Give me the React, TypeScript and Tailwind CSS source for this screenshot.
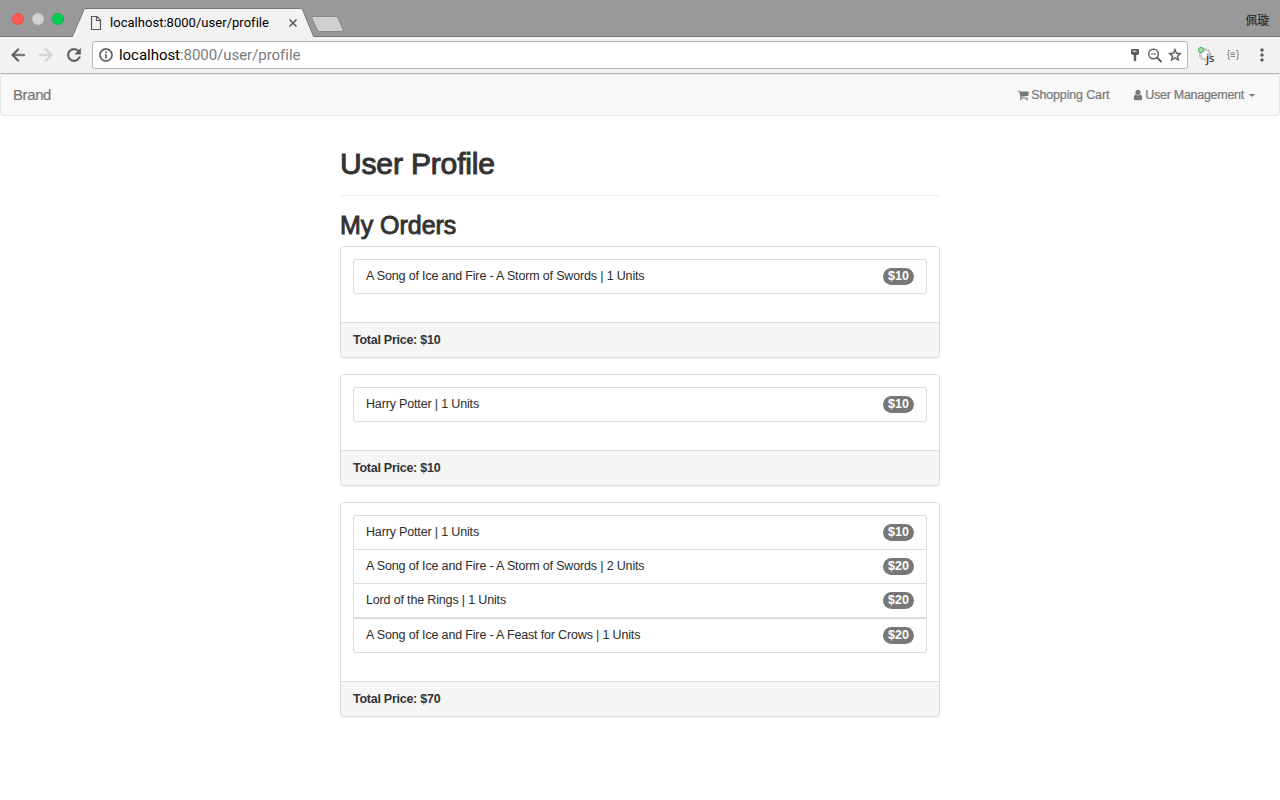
import type { ReactNode } from 'react';
import { MdArrowBack, MdArrowForward, MdRefresh, MdInfoOutline, MdStarBorder, MdMoreVert } from 'react-icons/md';

type Item = { title: string; units: number; price: number };

const orders: { items: Item[]; total: number }[] = [
  { items: [{ title: 'A Song of Ice and Fire - A Storm of Swords', units: 1, price: 10 }], total: 10 },
  { items: [{ title: 'Harry Potter', units: 1, price: 10 }], total: 10 },
  {
    items: [
      { title: 'Harry Potter', units: 1, price: 10 },
      { title: 'A Song of Ice and Fire - A Storm of Swords', units: 2, price: 20 },
      { title: 'Lord of the Rings', units: 1, price: 20 },
      { title: 'A Song of Ice and Fire - A Feast for Crows', units: 1, price: 20 },
    ],
    total: 70,
  },
];

function Glyph({ d, className }: { d: string; className: string }) {
  return (
    <svg viewBox="0 0 1792 1792" className={className} fill="currentColor">
      <path d={d} />
    </svg>
  );
}

const cartPath =
  'M704 1536q0 52-38 90t-90 38-90-38-38-90 38-90 90-38 90 38 38 90zm896 0q0 52-38 90t-90 38-90-38-38-90 38-90 90-38 90 38 38 90zm128-1088v512q0 24-16.5 42.5t-40.5 21.5l-1044 122q13 60 13 70 0 16-24 64h920q26 0 45 19t19 45-19 45-45 19h-1024q-26 0-45-19t-19-45q0-11 8-31.5t16-36 21.5-40 15.5-29.5l-177-823h-204q-26 0-45-19t-19-45 19-45 45-19h256q16 0 28.5 6.5t19.5 15.5 13 24.5 8 26 5.5 29.5 4.5 26h1201q26 0 45 19t19 45z';
const userPath =
  'M1536 1399q0 109-62.5 187t-150.5 78h-854q-88 0-150.5-78t-62.5-187q0-85 8.5-160.5t31.5-152 58.5-131 94-89 134.5-34.5q131 128 313 128t313-128q76 0 134.5 34.5t94 89 58.5 131 31.5 152 8.5 160.5zm-256-887q0 159-112.5 271.5t-271.5 112.5-271.5-112.5-112.5-271.5 112.5-271.5 271.5-112.5 271.5 112.5 112.5 271.5z';

function TabStrip() {
  return (
    <div className="relative flex h-[37px] bg-[#999999]">
      <svg className="absolute inset-0 h-[37px] w-full" viewBox="0 0 1280 37">
        <path d="M0 36.5H1280" stroke="#737373" />
        <path d="M72 37L84 9.500Q84.500 8.500 86 8.500H300.500Q302 8.500 302.500 9.500L314 37Z" fill="#f2f2f2" />
        <path d="M71 36.500H72.500L84 9.500Q84.500 8.500 86 8.500H300.500Q302 8.500 302.500 9.500L313.500 36.500H315" fill="none" stroke="#737373" />
        <path d="M313 16.500H335.500Q337.500 16.500 338 18L343 29.500Q343.500 31.500 341.500 31.500H319.500Q317.500 31.500 317 29.500L312 18.500Q311.500 16.500 313 16.500Z" fill="#d0d0d0" stroke="#858585" />
        <circle cx="18" cy="19" r="5.800" fill="#ff5a52" stroke="#e2463f" strokeWidth=".6" />
        <circle cx="38" cy="19" r="5.800" fill="#d1d1d1" stroke="#bdbdbd" strokeWidth=".6" />
        <circle cx="58" cy="19" r="5.800" fill="#05cc52" stroke="#0fab45" strokeWidth=".6" />
        <path d="M91.500 16.500h5.500l3.500 3.500v9.500h-9zM96.500 16.500v4h4" fill="#f2f2f2" stroke="#5a5a5a" strokeWidth="1.200" />
        <path d="M289.500 19.500l7 7M296.500 19.500l-7 7" stroke="#5a5a5a" strokeWidth="1.600" />
      </svg>
      <div className="relative flex w-full items-center justify-between pt-[9px] pr-[11px] pl-[110px]">
        <span className="font-['Roboto',sans-serif] text-[13px] leading-[16px] tracking-[0.03px] text-black">localhost:8000/user/profile</span>
        <span className="mt-[-7px] font-['Noto_Sans_CJK_SC',sans-serif] text-[12px] leading-[16px] tracking-[-0.2px] text-[#181818]">佩璇</span>
      </div>
    </div>
  );
}

function Toolbar() {
  return (
    <div className="flex h-[37px] items-center border-b border-[#b5b5b5] bg-[#f2f2f2] pl-[8px] text-[#5a5a5a]">
      <MdArrowBack className="size-5 [&>path[fill=none]]:stroke-none" stroke="currentColor" strokeWidth="0.5" />
      <MdArrowForward className="ml-2 size-5 text-[#d2d2d2] [&>path[fill=none]]:stroke-none" stroke="currentColor" strokeWidth="0.5" />
      <MdRefresh className="ml-2 size-5 [&>path[fill=none]]:stroke-none" stroke="currentColor" strokeWidth="0.5" />
      <div className="ml-2 flex h-7 w-[1096px] items-center rounded-[3px] border border-[#b5b5b5] bg-white pl-[5px]">
        <MdInfoOutline className="size-4 [&>path[fill=none]]:stroke-none" stroke="currentColor" strokeWidth="0.5" />
        <span className="ml-[5px] flex-1 font-['Roboto',sans-serif] text-[15px] leading-5 tracking-[-0.04px] text-[#7b7b7b]">
          <span className="text-black">localhost</span>:8000/user/profile
        </span>
        <svg className="h-[26px] w-[41px]" viewBox="0 0 41 26" fill="none">
          <path fillRule="evenodd" d="M5 7h7q1 0 1 1v3q0 2-2 2h-.8v6h-2.400v-6h-.8q-2 0-2-2v-3q0-1 1-1zM6.500 8.800v1h4v-1z" fill="#5a5a5a" />
          <circle cx="27.500" cy="12" r="4.800" stroke="#5a5a5a" strokeWidth="1.400" />
          <path d="M31 15.500l4.500 4.500" stroke="#5a5a5a" strokeWidth="1.800" />
          <path d="M25 12h5" stroke="#5a5a5a" />
        </svg>
        <MdStarBorder className="mr-[4px] size-4 [&>path[fill=none]]:stroke-none" stroke="currentColor" strokeWidth="0.6" />
      </div>
      <div className="relative ml-[9px] size-[18px]">
        <svg className="size-[18px]" viewBox="0 0 18 18" fill="none">
          <circle cx="8" cy="8.500" r="5" stroke="#b9b9b9" strokeWidth="2.400" strokeDasharray="2.200 1" />
          <circle cx="8" cy="8.500" r="4" fill="#fafafa" stroke="#c8c8c8" strokeWidth=".7" />
          <circle cx="4" cy="4" r="2.600" fill="#a5dfae" stroke="#42b65a" strokeWidth="1" />
        </svg>
        <span className="absolute top-[5px] left-[9px] font-['Open_Sans',sans-serif] text-[11px] leading-[13px] font-semibold text-[#3d3d3d]">js</span>
      </div>
      <span className="ml-[11px] w-[14px] text-center font-['Liberation_Sans',sans-serif] text-[10px] leading-3 text-[#777777]">{'{≡}'}</span>
      <MdMoreVert className="ml-[12px] size-5" />
    </div>
  );
}

function NavItem({ icon, children }: { icon: ReactNode; children: ReactNode }) {
  return (
    <a className="flex items-center">
      {icon}
      {children}
    </a>
  );
}

function Order({ items, total }: { items: Item[]; total: number }) {
  return (
    <section className="rounded-[3px] border border-[#dddddd] bg-white shadow-[0_1px_1px_rgba(0,0,0,0.05)]">
      <ul className="mx-3 mt-3 mb-7 rounded-[3px] border border-[#dddddd]">
        {items.map((item, i) => (
          <li
            key={i}
            className={
              'flex items-center justify-between border-[#dddddd] px-3 ' +
              (i === 0 ? 'h-[33px]' : i === 3 ? 'h-[35px] border-t-2' : 'h-[34px] border-t')
            }
          >
            <span className="pb-[2px] text-[12.5px] leading-4 tracking-[-0.16px] text-[#2b2b2b]">
              {item.title} | {item.units} Units
            </span>
            <span className="flex h-[17px] w-[31px] items-center justify-center rounded-full bg-[#777777] pb-px text-[12.5px] leading-none font-bold text-white">
              ${item.price}
            </span>
          </li>
        ))}
      </ul>
      <footer className="flex h-[35px] items-center rounded-b-[2px] border-t border-[#dddddd] bg-[#f5f5f5] px-3 text-[12.5px] font-bold tracking-[-0.26px]">
        Total Price: ${total}
      </footer>
    </section>
  );
}

export default function App() {
  return (
    <div className="h-[800px] overflow-hidden bg-white font-['Liberation_Sans',Arial,sans-serif] text-[#333333]">
      <TabStrip />
      <Toolbar />
      <nav className="flex h-[42px] items-center justify-between rounded-[3px] border border-[#e7e7e7] bg-[#f8f8f8] pr-[24px] pl-3 text-[12.5px] text-[#777777]">
        <span className="text-[15px] tracking-[-0.4px] [-webkit-text-stroke:0.2px_#777777]">Brand</span>
        <div className="flex gap-[23px] tracking-[-0.15px] [-webkit-text-stroke:0.2px_#777777]">
          <NavItem icon={<Glyph d={cartPath} className="mr-[2px] size-3" />}>Shopping Cart</NavItem>
          <NavItem icon={<Glyph d={userPath} className="mr-[1px] size-3" />}>
            <span className="tracking-[-0.27px]">User Management</span>
            <svg className="ml-[5px] h-[3px] w-[6px]" viewBox="0 0 6 3" fill="currentColor">
              <path d="M0 0h6L3 3z" />
            </svg>
          </NavItem>
        </div>
      </nav>
      <main className="mx-auto w-[600px] pt-[30px]">
        <h1 className="h-[50px] border-b border-[#eeeeee] text-[30px] leading-9 tracking-[-0.15px] [-webkit-text-stroke:1px_#333333]">User Profile</h1>
        <h2 className="mt-[14px] mb-[6px] text-[25px] leading-[30px] tracking-[-0.05px] [-webkit-text-stroke:0.9px_#333333]">My Orders</h2>
        <div className="flex flex-col gap-4">
          {orders.map((o, i) => (
            <Order key={i} items={o.items} total={o.total} />
          ))}
        </div>
      </main>
    </div>
  );
}
